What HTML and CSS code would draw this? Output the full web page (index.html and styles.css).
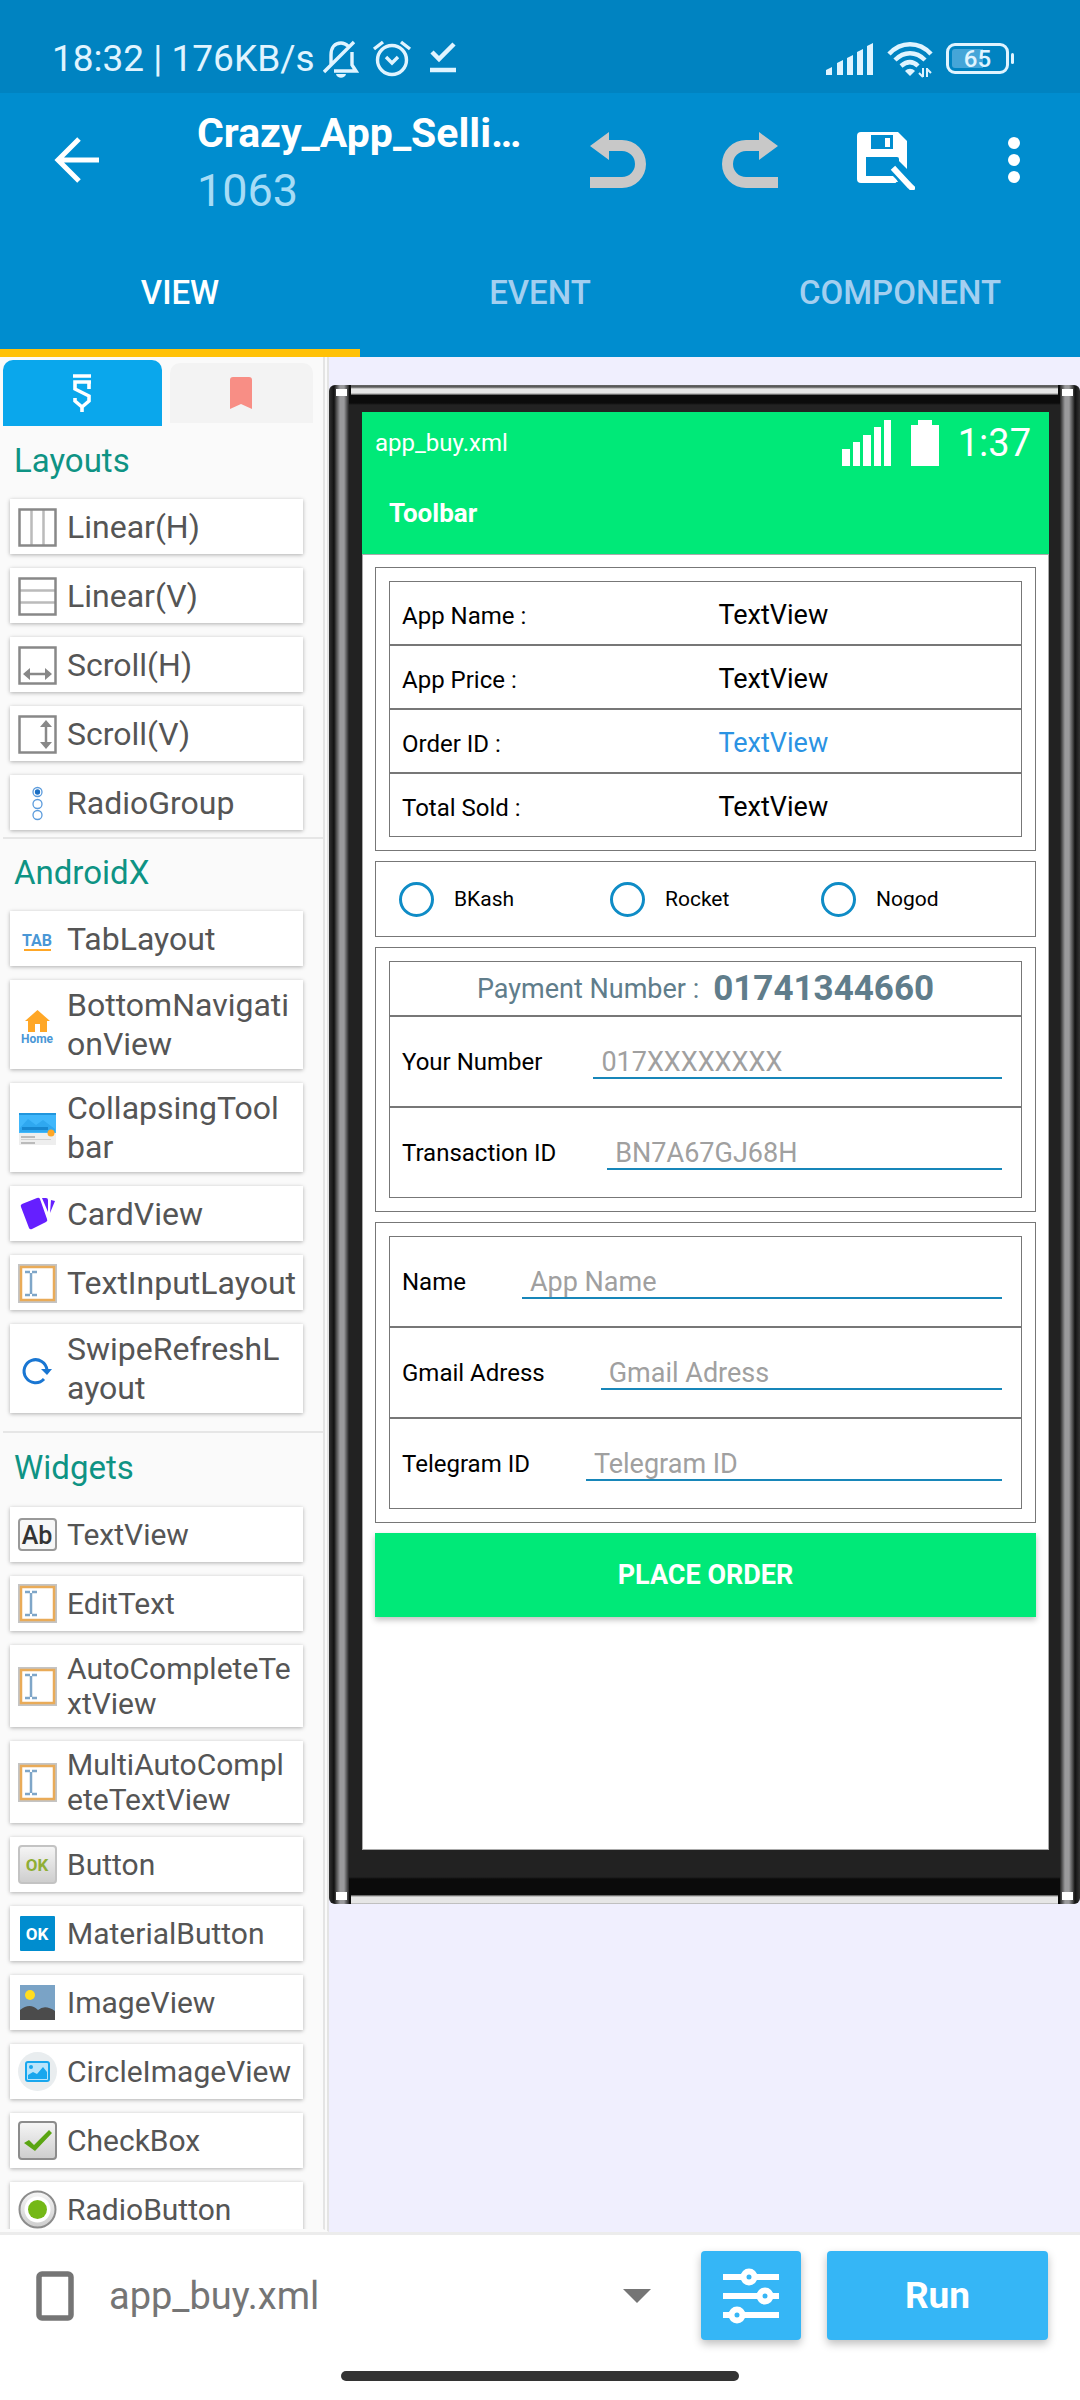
FILE: index.html
```html
<!DOCTYPE html>
<html lang="en">
<head>
    <meta charset="UTF-8">
    <meta name="viewport" content="width=device-width, initial-scale=1.0">
    <title>Crazy_App_Selli… - app_buy.xml</title>
    <link rel="stylesheet" href="styles.css">
</head>
<body>
    <svg class="defs" width="0" height="0" aria-hidden="true">
        <symbol id="icon-input" viewBox="0 0 39 39">
            <rect x="1" y="1" width="37" height="37" fill="#fff" stroke="#c4c4c4" stroke-width="2"/>
            <rect x="3" y="3" width="33" height="33" fill="none" stroke="#e9ab58" stroke-width="2.5"/>
            <path d="M7 8h5M14 8h5M7 31h5M14 31h5M13 9v21" fill="none" stroke="#7fa6c8" stroke-width="2.5"/>
        </symbol>
    </svg>

    <header class="header">
        <div class="status-bar">
            <span class="clock">18:32 | 176KB/s</span>
            <svg width="36" height="40" viewBox="0 0 36 40" fill="none" stroke="#e0f4ff" stroke-width="3.4">
                <path d="M8 26V16C8 8 12 4 18 4c3 0 5 1 7 3M29 13v13l4 6H11M1 33L31 3"/>
                <path d="M13 35h10c-1 5-9 5-10 0z" fill="#e0f4ff" stroke="none"/>
            </svg>
            <svg width="40" height="40" viewBox="0 0 40 40" fill="none" stroke="#e0f4ff" stroke-width="3.4">
                <circle cx="20" cy="21" r="14.5"/>
                <path d="M14 18l6 6 6-6M2 10l9-7M38 10l-9-7"/>
            </svg>
            <svg class="done-icon" width="26" height="40" viewBox="0 0 26 40" fill="none" stroke="#e0f4ff" stroke-width="4.5">
                <path d="M2 13l7 7L24 5M0 31h26"/>
            </svg>
            <span class="spacer"></span>
            <svg width="48" height="34" viewBox="0 0 48 34" fill="#e0f4ff">
                <path d="M0 33v-5l6-3v8zM11 33V21l6-3v15zM21 33V16l6-3v20zM31 33V10l6-3v26zM41 33V4l6-3v32z"/>
            </svg>
            <svg width="46" height="38" viewBox="0 0 46 38" fill="none" stroke="#e0f4ff" stroke-width="4.5">
                <path d="M2 14C14 1 32 1 44 14M8 20c9-9 21-9 30 0M14 26c6-5 12-5 17 0"/>
                <path d="M23 36l-5-5c3-3 7-3 10 0z" fill="#e0f4ff" stroke="none"/>
                <path d="M36 28v9M40 28v9M36 37l-4-4M40 29l4 4" stroke-width="2"/>
            </svg>
            <span class="battery">65</span>
        </div>

        <div class="app-bar">
            <button class="icon-btn back" aria-label="Back">
                <svg width="46" height="46" viewBox="0 0 46 46" fill="none" stroke="#fff" stroke-width="5">
                    <path d="M25 2L4 23l21 21M4 23h41"/>
                </svg>
            </button>
            <div class="titles">
                <h1>Crazy_App_Selli…</h1>
                <p>1063</p>
            </div>
            <button class="icon-btn" aria-label="Undo">
                <svg width="56" height="56" viewBox="0 0 56 56">
                    <path d="M0 14L19 0v8h13a24 24 0 0 1 0 48H0V45h32a13 13 0 0 0 0-26H19v9z" fill="#c8c8c8"/>
                </svg>
            </button>
            <button class="icon-btn" aria-label="Redo">
                <svg width="56" height="56" viewBox="0 0 56 56">
                    <path d="M56 14L37 0v8H24a24 24 0 0 0 0 48h32V45H24a13 13 0 0 1 0-26h13v9z" fill="#c8c8c8"/>
                </svg>
            </button>
            <button class="icon-btn" aria-label="Save">
                <svg width="66" height="60" viewBox="0 0 66 60">
                    <path d="M12 2h37l9 9v42H12a4 4 0 0 1-4-4V6a4 4 0 0 1 4-4z" fill="#fff"/>
                    <path d="M22 5h22v14H22zM17 27h31a2 2 0 0 1 2 2v17H17V29z" fill="#008dcf"/>
                    <path d="M36 8h5v9h-5z" fill="#fff"/>
                    <path d="M50 31l12 12v17H54L38 43z" fill="#008dcf"/>
                    <path d="M17 44v2h29l3 6H17z" fill="#fff"/>
                    <path d="M42 37l21 21" stroke="#008dcf" stroke-width="10"/>
                    <path d="M46 40l13 14M61 56l2 2" stroke="#fff" stroke-width="6" stroke-linecap="square"/>
                </svg>
            </button>
            <button class="icon-btn" aria-label="More options">
                <svg width="12" height="46" viewBox="0 0 12 46" fill="#fff">
                    <circle cx="6" cy="6" r="6"/><circle cx="6" cy="23" r="6"/><circle cx="6" cy="40" r="6"/>
                </svg>
            </button>
        </div>

        <nav class="tabs">
            <button class="tab active">VIEW</button>
            <button class="tab">EVENT</button>
            <button class="tab">COMPONENT</button>
        </nav>
    </header>

    <main class="editor">
        <aside class="palette">
            <div class="palette-tabs">
                <button class="palette-tab active" aria-label="Widgets">
                    <svg width="20" height="38" viewBox="0 0 20 38" fill="none" stroke="#fff" stroke-width="3.6">
                        <path d="M1 2h18M19 8H3v7l14 7v5l-7 6-7-6v-3M17 8v7M10 32v6"/>
                    </svg>
                </button>
                <button class="palette-tab" aria-label="Favorites">
                    <svg width="22" height="32" viewBox="0 0 22 32">
                        <path d="M3 0h16a3 3 0 0 1 3 3v29l-11-5-11 5V3a3 3 0 0 1 3-3z" fill="#f88e85"/>
                    </svg>
                </button>
            </div>

            <section class="group">
                <h2>Layouts</h2>
                <ul>
                    <li>
                        <svg viewBox="0 0 39 39" fill="none">
                            <path d="M13.5 2v35M25.5 2v35" stroke="#bbb" stroke-width="2.5"/>
                            <rect x="1.5" y="1.5" width="36" height="36" stroke="#888" stroke-width="2.5"/>
                        </svg>
                        <span>Linear(H)</span>
                    </li>
                    <li>
                        <svg viewBox="0 0 39 39" fill="none">
                            <path d="M2 13.5h35M2 25.5h35" stroke="#bbb" stroke-width="2.5"/>
                            <rect x="1.5" y="1.5" width="36" height="36" stroke="#888" stroke-width="2.5"/>
                        </svg>
                        <span>Linear(V)</span>
                    </li>
                    <li>
                        <svg viewBox="0 0 39 39" fill="none">
                            <rect x="1.5" y="1.5" width="36" height="36" stroke="#888" stroke-width="2.5"/>
                            <path d="M7 28h25" stroke="#888" stroke-width="2.5"/>
                            <path d="M5 28l7-6v12zM34 28l-7-6v12z" fill="#888"/>
                        </svg>
                        <span>Scroll(H)</span>
                    </li>
                    <li>
                        <svg viewBox="0 0 39 39" fill="none">
                            <rect x="1.5" y="1.5" width="36" height="36" stroke="#888" stroke-width="2.5"/>
                            <path d="M28 7v25" stroke="#888" stroke-width="2.5"/>
                            <path d="M28 5l-6 7h12zM28 34l-6-7h12z" fill="#888"/>
                        </svg>
                        <span>Scroll(V)</span>
                    </li>
                    <li>
                        <svg viewBox="0 0 39 39" fill="none" stroke="#5b9bdc" stroke-width="1.3">
                            <circle cx="19.5" cy="8" r="4.5"/><circle cx="19.5" cy="20" r="4.5"/><circle cx="19.5" cy="31" r="4.5"/>
                            <circle cx="19.5" cy="8" r="2" fill="#1c6fc4" stroke="#1c6fc4"/>
                        </svg>
                        <span>RadioGroup</span>
                    </li>
                </ul>
            </section>

            <section class="group">
                <h2>AndroidX</h2>
                <ul>
                    <li>
                        <svg viewBox="0 0 39 39">
                            <text x="19" y="26" class="svg-text tab-text">TAB</text>
                            <path d="M6 29h27v2H6z" fill="#ffa726"/>
                        </svg>
                        <span>TabLayout</span>
                    </li>
                    <li>
                        <svg viewBox="0 0 39 39">
                            <path d="M19.5 4L32 15h-3v11h-7v-8h-5v8h-7V15H7z" fill="#ffa726"/>
                            <text x="19" y="37" class="svg-text home-text">Home</text>
                        </svg>
                        <span>BottomNavigati<wbr>onView</span>
                    </li>
                    <li>
                        <svg viewBox="0 0 39 39">
                            <path d="M1 4h37v20H1z" fill="#40b7fb"/>
                            <path d="M1 4h37v2H1z" fill="#2196dd"/>
                            <path d="M2 19l8-9 8 6 7-5 12 9v3H2z" fill="#2fa8f0"/>
                            <path d="M4 18h26v3H4z" fill="#1787d0"/>
                            <path d="M1 24h37v12H1z" fill="#eee"/>
                            <path d="M3 27h14v2H3zM3 33h14v2H3z" fill="#bbb"/><path d="M3 30h30v1H3z" fill="#d0d0d0"/>
                            <circle cx="33" cy="24" r="3.5" fill="#ffa726"/>
                        </svg>
                        <span>CollapsingTool<wbr>bar</span>
                    </li>
                    <li>
                        <svg viewBox="0 0 39 39" fill="#651fff">
                            <path d="M4 9l15-6q2-1 3 1l7 20q1 2-1 3l-14 7q-2 1-3-1L3 12q-1-2 1-3zM24 3h4q2 0 2 2v12zM33 5l4 1-5 12z"/>
                        </svg>
                        <span>CardView</span>
                    </li>
                    <li>
                        <svg><use href="#icon-input"/></svg>
                        <span>TextInputLayout</span>
                    </li>
                    <li>
                        <svg viewBox="0 0 39 39" fill="none">
                            <path d="M26 29A11.5 11.5 0 1 1 29 20" stroke="#1976d2" stroke-width="3"/>
                            <path d="M23 19h11l-5 6z" fill="#1976d2"/>
                        </svg>
                        <span>SwipeRefreshL<wbr>ayout</span>
                    </li>
                </ul>
            </section>

            <section class="group widgets">
                <h2>Widgets</h2>
                <ul>
                    <li>
                        <svg viewBox="0 0 39 39">
                            <rect x="1" y="4" width="37" height="31" rx="3" fill="#f7f7f7" stroke="#999" stroke-width="2"/>
                            <text x="19" y="29" class="svg-text ab-text">Ab</text>
                        </svg>
                        <span>TextView</span>
                    </li>
                    <li>
                        <svg><use href="#icon-input"/></svg>
                        <span>EditText</span>
                    </li>
                    <li>
                        <svg><use href="#icon-input"/></svg>
                        <span>AutoCompleteTe<wbr>xtView</span>
                    </li>
                    <li>
                        <svg><use href="#icon-input"/></svg>
                        <span>MultiAutoCompl<wbr>eteTextView</span>
                    </li>
                    <li>
                        <svg viewBox="0 0 39 39">
                            <defs>
                                <linearGradient id="grey-fade" x1="0" y1="0" x2="0" y2="1">
                                    <stop offset="0" stop-color="#f6f6f6"/><stop offset="1" stop-color="#cdcdcd"/>
                                </linearGradient>
                            </defs>
                            <rect x="1" y="1" width="37" height="37" rx="3" fill="url(#grey-fade)" stroke="#c3c3c3" stroke-width="2"/>
                            <text x="19" y="26" class="svg-text ok-text">OK</text>
                        </svg>
                        <span>Button</span>
                    </li>
                    <li>
                        <svg viewBox="0 0 39 39">
                            <rect x="2" y="2" width="35" height="35" rx="1" fill="#008dcf"/>
                            <text x="19" y="26" class="svg-text ok-text light">OK</text>
                        </svg>
                        <span>MaterialButton</span>
                    </li>
                    <li>
                        <svg viewBox="0 0 39 39">
                            <path d="M2 2h35v35H2z" fill="#7aa3c6"/>
                            <circle cx="12" cy="12" r="5" fill="#ffdd20"/>
                            <path d="M2 27q10-8 18 0 7-6 17 1v9H2z" fill="#4b4b4b"/>
                        </svg>
                        <span>ImageView</span>
                    </li>
                    <li>
                        <svg viewBox="0 0 39 39">
                            <circle cx="19.5" cy="19.5" r="19.5" fill="#e9edef"/>
                            <rect x="8" y="10" width="23" height="19" rx="2" fill="#b8e4fb" stroke="#18a7ee" stroke-width="2"/>
                            <circle cx="13" cy="15" r="2" fill="#18a7ee"/>
                            <path d="M10 27v-4l5-3 4 2 6-7 4 5v7z" fill="#18a7ee"/>
                        </svg>
                        <span>CircleImageView</span>
                    </li>
                    <li>
                        <svg viewBox="0 0 39 39">
                            <rect x="1" y="1" width="37" height="37" rx="3" fill="url(#grey-fade)" stroke="#8c8c8c" stroke-width="2"/>
                            <path d="M6 22l5-3 5 5L31 9l3 3-17 18z" fill="#5aa512"/>
                        </svg>
                        <span>CheckBox</span>
                    </li>
                    <li>
                        <svg viewBox="0 0 39 39">
                            <circle cx="19.5" cy="19.5" r="18" fill="url(#grey-fade)" stroke="#8c8c8c" stroke-width="2"/>
                            <circle cx="19.5" cy="19.5" r="13" fill="#fff"/>
                            <circle cx="19.5" cy="19.5" r="9.5" fill="#74b816"/>
                        </svg>
                        <span>RadioButton</span>
                    </li>
                </ul>
            </section>
        </aside>

        <section class="canvas">
            <div class="phone">
                <form class="screen">
                    <div class="phone-status">
                        <span>app_buy.xml</span>
                        <svg width="50" height="46" viewBox="0 0 50 46" fill="#fff">
                            <path d="M0 29h8v17H0zM11 22h7v24h-7zM21 15h8v31h-8zM32 7h7v39h-7zM42 0h7v46h-7z"/>
                        </svg>
                        <svg width="28" height="46" viewBox="0 0 28 46" fill="#fff">
                            <path d="M7 0h14v5h7v41H0V5h7z"/>
                        </svg>
                        <span class="phone-clock">1:37</span>
                    </div>
                    <div class="phone-toolbar">Toolbar</div>

                    <div class="content">
                        <dl class="box">
                            <div class="row info"><dt>App Name :</dt><dd>TextView</dd></div>
                            <div class="row info"><dt>App Price :</dt><dd>TextView</dd></div>
                            <div class="row info"><dt>Order ID :</dt><dd class="link">TextView</dd></div>
                            <div class="row info"><dt>Total Sold :</dt><dd>TextView</dd></div>
                        </dl>

                        <div class="box radios">
                            <label><input type="radio" name="method">BKash</label>
                            <label><input type="radio" name="method">Rocket</label>
                            <label><input type="radio" name="method">Nogod</label>
                        </div>

                        <div class="box payment">
                            <div class="row number">
                                <span>Payment Number :</span>
                                <strong>01741344660</strong>
                            </div>
                            <div class="row field">
                                <label for="yourNumber">Your Number</label>
                                <input type="text" id="yourNumber" placeholder="017XXXXXXXX">
                            </div>
                            <div class="row field">
                                <label for="transactionId">Transaction ID</label>
                                <input type="text" id="transactionId" placeholder="BN7A67GJ68H">
                            </div>
                        </div>

                        <div class="box account">
                            <div class="row field">
                                <label for="name">Name</label>
                                <input type="text" id="name" placeholder="App Name">
                            </div>
                            <div class="row field">
                                <label for="gmail">Gmail Adress</label>
                                <input type="text" id="gmail" placeholder="Gmail Adress">
                            </div>
                            <div class="row field">
                                <label for="telegram">Telegram ID</label>
                                <input type="text" id="telegram" placeholder="Telegram ID">
                            </div>
                        </div>

                        <button type="button" class="place-order">PLACE ORDER</button>
                    </div>
                </form>
            </div>
        </section>
    </main>

    <footer class="bottom">
        <div class="actions">
            <svg class="file-icon" width="38" height="50" viewBox="0 0 38 50" fill="none">
                <path d="M6 3h26a3 3 0 0 1 3 3v38a3 3 0 0 1-3 3H6a3 3 0 0 1-3-3V6a3 3 0 0 1 3-3z" stroke="#757575" stroke-width="5.5"/>
            </svg>
            <select class="file-select" aria-label="Layout file">
                <option>app_buy.xml</option>
            </select>
            <svg class="arrow" width="28" height="14" viewBox="0 0 28 14"><path d="M0 0h28L14 14z" fill="#757575"/></svg>
            <button class="blue-btn settings" aria-label="Properties">
                <svg width="56" height="56" viewBox="0 0 56 56" fill="#35b6f6" stroke="#fff" stroke-width="6">
                    <path d="M0 9h56M0 28h56M0 47h56"/>
                    <circle cx="26" cy="9" r="5.5"/><circle cx="42" cy="28" r="5.5"/><circle cx="14" cy="47" r="5.5"/>
                </svg>
            </button>
            <button class="blue-btn run">Run</button>
        </div>
        <div class="home-pill"></div>
    </footer>
</body>
</html>
```
FILE: styles.css
```css
* {
    box-sizing: border-box;
}
body {
    margin: 0;
    height: 100vh;
    display: flex;
    flex-direction: column;
    font-family: Roboto, "Liberation Sans", sans-serif;
    background-color: #fff;
}
h1, h2, p, ul, dl, dd {
    margin: 0;
    padding: 0;
}
ul {
    list-style: none;
}
button, input, select {
    font-family: inherit;
    border: none;
    background: none;
    padding: 0;
}
svg {
    display: block;
    flex-shrink: 0;
}
.defs {
    position: absolute;
}
.spacer {
    flex: 1;
}

/* header */
.header {
    background-color: #008dcf;
    color: #fff;
}
.status-bar {
    display: flex;
    align-items: center;
    gap: 13px;
    height: 93px;
    padding: 24px 71px 0 52px;
    background-color: #0083c1;
}
.clock {
    margin-right: -5px;
    font-size: 37px;
    color: #e0f4ff;
}
.done-icon {
    margin-left: 5px;
}
.battery {
    position: relative;
    width: 63px;
    height: 31px;
    border: 3px solid #e0f4ff;
    border-radius: 9px;
    background: linear-gradient(90deg, #45a5d8 60%, transparent 60%) content-box;
    padding: 3px;
    font-size: 24px;
    font-weight: 500;
    line-height: 21px;
    text-align: center;
    color: #e0f4ff;
}
.battery::after {
    content: "";
    position: absolute;
    right: -8px;
    top: 7px;
    width: 3px;
    height: 11px;
    border-radius: 2px;
    background-color: #e0f4ff;
}
.app-bar {
    display: flex;
    align-items: center;
    height: 134px;
}
.icon-btn {
    display: flex;
    align-items: center;
    justify-content: center;
    width: 132px;
    height: 132px;
}
.icon-btn.back {
    width: 154px;
}
.titles {
    flex: 1;
    min-width: 0;
    padding: 4px 0 0 43px;
    line-height: 58px;
    white-space: nowrap;
}
.titles h1 {
    font-size: 41px;
    font-weight: 700;
    line-height: 58px;
}
.titles p {
    font-size: 45px;
    color: #a6dcf6;
}
.tabs {
    display: grid;
    grid-template-columns: repeat(3, 1fr);
}
.tab {
    height: 130px;
    border-top: 8px solid transparent;
    border-bottom: 8px solid transparent;
    font-size: 33px;
    font-weight: 500;
    color: #a3cff0;
}
.tab.active {
    color: #fff;
    border-bottom-color: #ffc107;
}

/* palette */
.editor {
    flex: 1;
    min-height: 0;
    display: flex;
}
.palette {
    width: 329px;
    flex-shrink: 0;
    overflow: hidden;
    border-right: 6px double #e4e4e4;
    background-color: #fafafa;
    padding-top: 3px;
    border-bottom: 3px solid #fafafa;
}
.palette-tabs {
    display: flex;
    align-items: center;
    gap: 8px;
    padding: 0 10px 0 3px;
}
.palette-tab {
    display: flex;
    align-items: center;
    justify-content: center;
    flex: 9;
    height: 60px;
    border-radius: 10px 10px 0 0;
    background-color: #f3f3f3;
}
.palette-tab.active {
    flex: 10;
    height: 66px;
    background-color: #0aa7ec;
}
.group {
    margin-left: 3px;
    padding: 0 20px 7px 7px;
}
.group + .group {
    padding-bottom: 18px;
    border-top: 2px solid #e6e6e6;
}
.group h2 {
    padding: 15px 4px 19px;
    font-size: 33px;
    font-weight: 400;
    line-height: 39px;
    color: #0e9384;
}
.group + .group h2 {
    padding: 14px 4px 19px;
}
.group.widgets h2 {
    padding: 15px 4px 20px;
}
.group ul {
    display: flex;
    flex-direction: column;
    gap: 14px;
}
.group li {
    display: flex;
    align-items: center;
    gap: 10px;
    min-height: 55px;
    padding: 6px 3px 5px 8px;
    background-color: #fff;
    box-shadow: 0 1px 4px rgba(0, 0, 0, 0.3);
    font-size: 32px;
    line-height: 39px;
    color: #555;
}
.group li svg {
    width: 39px;
    height: 39px;
}
.group li span {
    min-width: 0;
    overflow-wrap: anywhere;
}
.group.widgets li {
    padding: 6px 3px 6px 8px;
    font-size: 30px;
    line-height: 35px;
}
.svg-text {
    font-family: Roboto, sans-serif;
    font-weight: 700;
    text-anchor: middle;
}
.tab-text {
    font-size: 16px;
    fill: #4a97d6;
}
.home-text {
    font-size: 12px;
    fill: #4a97d6;
}
.ab-text {
    font-size: 25px;
    font-weight: 500;
    fill: #333;
}
.ok-text {
    font-size: 17px;
    fill: #8fae35;
}
.ok-text.light {
    fill: #fff;
}

/* canvas with phone */
.canvas {
    flex: 1;
    min-width: 0;
    padding-top: 28px;
    background-color: #f0effe;
}
.phone {
    aspect-ratio: 751 / 1519;
    display: flex;
    padding: 27px 31px 54px 33px;
    border-radius: 6px;
    background:
        linear-gradient(#fff, #fff) 7px 4px / 11px 7px no-repeat,
        linear-gradient(#fff, #fff) right 7px top 4px / 11px 7px no-repeat,
        linear-gradient(#fff, #fff) 7px calc(100% - 4px) / 11px 8px no-repeat,
        linear-gradient(#fff, #fff) right 7px bottom 4px / 11px 8px no-repeat,
        linear-gradient(#666, #555 2px, #e6e6e6 4px, #e6e6e6 8px, #444) center top / calc(100% - 44px) 10px no-repeat,
        linear-gradient(#444, #e6e6e6 2px, #e6e6e6 8px, #999) center bottom / calc(100% - 44px) 9px no-repeat,
        linear-gradient(90deg, #333, #111 5px, #444 7px, #9a9a9c 11px, #9a9a9c 15px, #222 20px) left top / 20px 100% no-repeat,
        linear-gradient(270deg, #333, #111 5px, #444 7px, #9a9a9c 11px, #9a9a9c 15px, #222 20px) right top / 20px 100% no-repeat,
        linear-gradient(#0b0b0b, #0b0b0b 18px, #222 20px, #222 calc(100% - 27px), #0b0b0b calc(100% - 25px));
}
.screen {
    flex: 1;
    display: flex;
    flex-direction: column;
    background-color: #fff;
}
.phone-status {
    display: flex;
    align-items: center;
    gap: 19px;
    height: 61px;
    padding: 0 18px 0 13px;
    background-color: #00e978;
    font-size: 24px;
    color: #fff;
}
.phone-status span:first-child {
    flex: 1;
}
.phone-clock {
    font-size: 38px;
}
.phone-toolbar {
    height: 81px;
    padding: 0 27px;
    background-color: #00e978;
    font-size: 26px;
    font-weight: 700;
    line-height: 81px;
    color: #fff;
}
.content {
    flex: 1;
    display: flex;
    flex-direction: column;
    gap: 10px;
    padding: 12px;
    border: 1px solid #aaa;
}
.box {
    padding: 13px;
    border: 1px solid #777;
}
.row {
    display: flex;
    border: 1px solid #777;
    padding: 0 12px;
    font-size: 24px;
    color: #000;
}
.info {
    height: 64px;
    align-items: baseline;
    line-height: 67px;
}
.info dt {
    flex: 1;
}
.info dd {
    flex: 1;
    padding-left: 26px;
    font-size: 27px;
}
.info .link {
    color: #2b93e3;
}
.radios {
    display: grid;
    grid-template-columns: repeat(3, 1fr);
    height: 76px;
}
.radios label {
    display: flex;
    align-items: center;
    gap: 20px;
    padding-left: 10px;
    font-size: 21px;
}
.radios input {
    appearance: none;
    width: 35px;
    height: 35px;
    margin: 0;
    border: 3px solid #0f8cc6;
    border-radius: 50%;
}
.number {
    height: 55px;
    align-items: center;
    justify-content: center;
    gap: 14px;
    font-size: 27px;
    color: #607d8b;
}
.number strong {
    font-size: 35px;
}
.field {
    height: 91px;
    align-items: center;
    gap: 51px;
    padding-right: 19px;
}
.account .field {
    gap: 56px;
}
.field input {
    flex: 1;
    min-width: 0;
    height: 34px;
    padding: 3px 8px 0;
    border-bottom: 2px solid #1786b9;
    font-size: 27px;
    color: #000;
}
.field input::placeholder {
    color: #a0a0a0;
}
.place-order {
    height: 84px;
    background-color: #00e978;
    box-shadow: 0 3px 6px rgba(0, 0, 0, 0.25);
    font-size: 27px;
    font-weight: 700;
    color: #fff;
}

/* bottom bar */
.bottom {
    border-top: 3px solid #ececec;
    background-color: #fff;
}
.actions {
    display: flex;
    align-items: center;
    padding: 16px 32px 0 36px;
}
.file-icon {
    margin-right: 35px;
}
.file-select {
    flex: 1;
    appearance: none;
    height: 89px;
    font-size: 38px;
    color: #757575;
}
.arrow {
    margin-right: 50px;
}
.blue-btn {
    display: flex;
    align-items: center;
    justify-content: center;
    height: 89px;
    border-radius: 4px;
    background-color: #35b6f6;
    box-shadow: 0 4px 8px rgba(0, 0, 0, 0.25);
    font-size: 37px;
    font-weight: 700;
    color: #fff;
}
.settings {
    width: 100px;
    margin-right: 26px;
}
.run {
    width: 221px;
}
.home-pill {
    width: 398px;
    height: 10px;
    margin: 31px auto 19px;
    border-radius: 5px;
    background-color: #333;
}
```
